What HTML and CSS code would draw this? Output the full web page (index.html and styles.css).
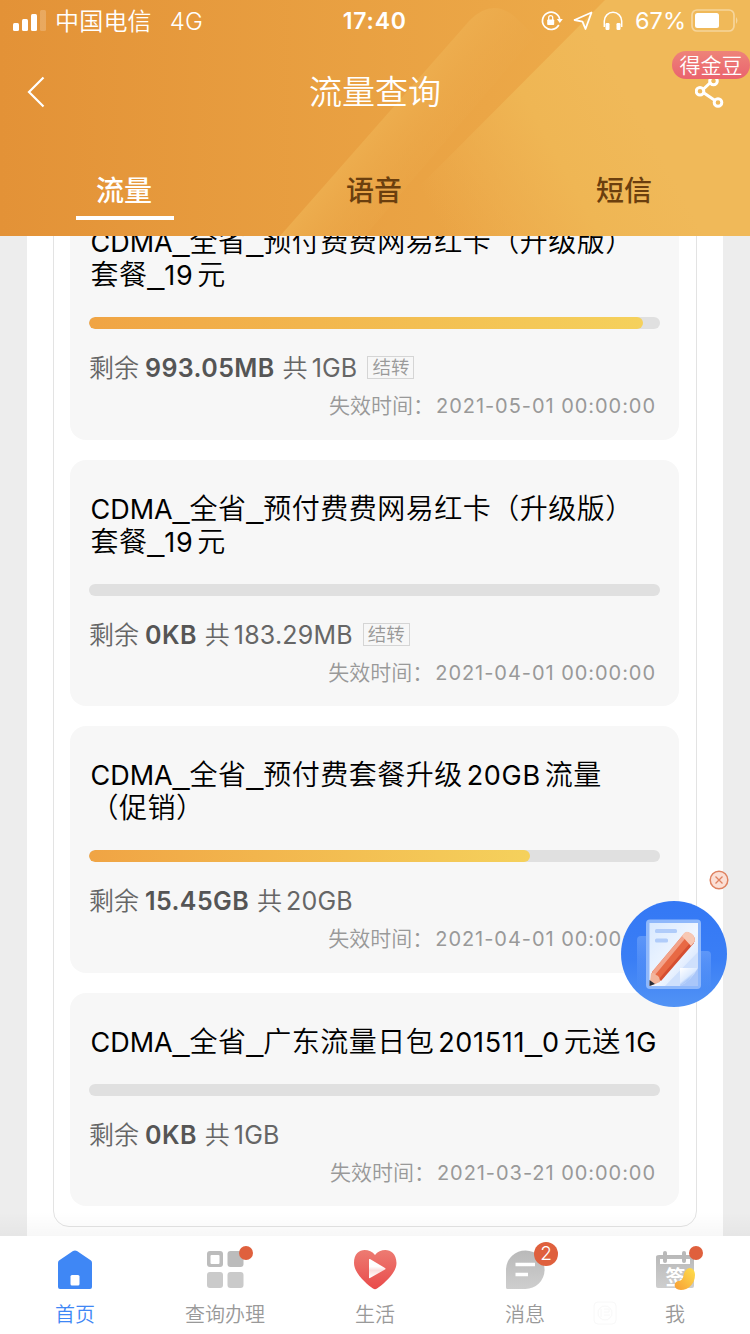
FILE: index.html
```html
<!DOCTYPE html>
<html lang="zh-CN">
<head>
<meta charset="utf-8">
<title>流量查询</title>
<link rel="stylesheet" href="styles.css">
</head>
<body>
<div class="app">
  <header class="header">
    <svg class="header-art" viewBox="0 0 750 236" preserveAspectRatio="none">
      <defs>
        <linearGradient id="base" x1="0" y1="0" x2="1" y2="0"><stop offset="0" stop-color="#e39237"/><stop offset=".65" stop-color="#eba646"/><stop offset="1" stop-color="#efb24e"/></linearGradient>
        <linearGradient id="band" gradientUnits="userSpaceOnUse" x1="375" y1="128" x2="441" y2="186"><stop offset="0" stop-color="#edad4e"/><stop offset="1" stop-color="#eba748" stop-opacity="0"/></linearGradient>
        <linearGradient id="right" gradientUnits="userSpaceOnUse" x1="420" y1="190" x2="620" y2="80"><stop offset="0" stop-color="#efb254" stop-opacity="0"/><stop offset=".6" stop-color="#efb654"/><stop offset="1" stop-color="#f0b959"/></linearGradient>
      </defs>
      <rect width="750" height="236" fill="url(#base)"/>
      <path d="M280 236L470 20Q492 -2 514 16L535 36L365 236Z" fill="url(#band)"/>
      <path d="M605 0H750V236H370Z" fill="url(#right)"/>
    </svg>
    <div class="status">
      <svg class="signal" width="34" height="22" viewBox="0 0 34 22" fill="#fff"><rect x="0" y="13" width="6" height="8" rx="1.5"/><rect x="9" y="9" width="6" height="12" rx="1.5"/><rect x="18" y="4" width="6" height="17" rx="1.5"/><rect x="27" y="0" width="6" height="21" rx="1.5" opacity=".2"/></svg>
      <span class="carrier">中国电信</span><span class="net">4G</span>
      <span class="clock">17:40</span>
      <div class="status-right">
        <svg width="22" height="22" viewBox="0 0 22 22" fill="none" stroke="#fff" stroke-width="1.7"><path d="M17.8 15A8.7 8.7 0 1 1 18.7 9"/><path d="M15.800 9h6l-3 4z" fill="#fff" stroke="none"/><rect x="6.2" y="9.5" width="7" height="5.5" rx=".8" fill="#fff" stroke="none"/><path d="M7.7 10V7.6a2 2 0 0 1 4 0V10" stroke-width="1.3"/></svg>
        <svg class="arrow" width="20" height="20" viewBox="0 0 20 20" fill="none" stroke="#fff" stroke-width="1.8" stroke-linejoin="round"><path d="M18.5 1.5L1.5 9l8 1.7 3 7.3z"/></svg>
        <svg class="phones" width="20" height="20" viewBox="0 0 20 20"><path d="M1.3 16V10a8.7 8.7 0 0 1 17.4 0v6" fill="none" stroke="#fff" stroke-width="1.5"/><rect x="2.500" y="12" width="4" height="7" rx="1.2" fill="#fff"/><rect x="13.500" y="12" width="4" height="7" rx="1.2" fill="#fff"/></svg>
        <span class="percent">67%</span>
        <svg class="battery" width="48" height="24" viewBox="0 0 48 24"><rect x="1" y="1" width="42" height="21" rx="5" fill="none" stroke="#fff" stroke-opacity=".4" stroke-width="1.7"/><rect x="4" y="4" width="24" height="15" rx="2.5" fill="#fff"/><path d="M45 8q3 3.5 0 7z" fill="#fff" opacity=".4"/></svg>
      </div>
    </div>
    <div class="titlebar">
      <svg class="back" width="18" height="32" viewBox="0 0 18 32" fill="none" stroke="#fff" stroke-width="2.2"><path d="M16.5 1.5L2 16l14.500 14.500"/></svg>
      <h1>流量查询</h1>
      <div class="share">
        <svg width="30" height="32" viewBox="0 0 30 32" fill="none" stroke="#fff" stroke-width="3"><path d="M8 13.500L16 6M9 17L20 24.500"/><circle cx="5" cy="15.200" r="3.800"/><circle cx="18.500" cy="5" r="3.800"/><circle cx="23" cy="26.500" r="3.800"/></svg>
        <span class="bonus">得金豆</span>
      </div>
    </div>
    <nav class="tabs"><a class="tab active">流量</a><a class="tab">语音</a><a class="tab">短信</a></nav>
  </header>

  <main class="content">
    <div class="sheet">
      <div class="panel">
        <article class="card">
          <h2><span class="la">CDMA</span><span class="us">_</span>全省<span class="us">_</span>预付费费网易红卡（升级版）<br>套餐<span class="us">_</span><span class="num">19</span><span class="gap"></span>元</h2>
          <div class="bar"><div class="fill" style="width:97%"></div></div>
          <p class="remain">剩余<b>993.05MB</b>共<span class="total">1GB</span><span class="tag">结转</span></p>
          <p class="expire">失效时间：<span class="date">2021-05-01 00:00:00</span></p>
        </article>
        <article class="card">
          <h2><span class="la">CDMA</span><span class="us">_</span>全省<span class="us">_</span>预付费费网易红卡（升级版）<br>套餐<span class="us">_</span><span class="num">19</span><span class="gap"></span>元</h2>
          <div class="bar"></div>
          <p class="remain">剩余<b>0KB</b>共<span class="total">183.29MB</span><span class="tag">结转</span></p>
          <p class="expire">失效时间：<span class="date">2021-04-01 00:00:00</span></p>
        </article>
        <article class="card">
          <h2><span class="la">CDMA</span><span class="us">_</span>全省<span class="us">_</span>预付费套餐升级<span class="gap"></span><span class="num">20GB</span><span class="gap"></span>流量<br>（促销）</h2>
          <div class="bar"><div class="fill" style="width:77.25%"></div></div>
          <p class="remain">剩余<b>15.45GB</b>共<span class="total">20GB</span></p>
          <p class="expire">失效时间：<span class="date">2021-04-01 00:00:00</span></p>
        </article>
        <article class="card">
          <h2><span class="la">CDMA</span><span class="us">_</span>全省<span class="us">_</span>广东流量日包<span class="gap"></span><span class="num">201511</span><span class="us">_</span><span class="num">0</span><span class="gap"></span>元送<span class="gap"></span><span class="num">1G</span></h2>
          <div class="bar"></div>
          <p class="remain">剩余<b>0KB</b>共<span class="total">1GB</span></p>
          <p class="expire">失效时间：<span class="date">2021-03-21 00:00:00</span></p>
        </article>
      </div>
    </div>
  </main>

  <nav class="bottom">
    <a class="item on">
      <svg width="44" height="44" viewBox="0 0 44 44"><path d="M6 12.500Q5 13 5 15V39q0 2 2 2H37q2 0 2-2V15q0-2-1-2.500L24 3q-2-1.200-4 0Z" fill="#3f87f5"/><rect x="17.500" y="27" width="9" height="10.500" rx="1.500" fill="#fff"/></svg>
      <span>首页</span>
    </a>
    <a class="item">
      <svg width="44" height="44" viewBox="0 0 44 44"><defs><linearGradient id="gray" x1="0" y1="0" x2="0" y2="1"><stop offset="0" stop-color="#b9b9b9"/><stop offset="1" stop-color="#cecece"/></linearGradient></defs><rect x="4" y="3" width="16" height="16" rx="3" fill="#bcbcbc"/><rect x="7.500" y="7" width="9" height="9" rx="1" fill="#fff"/><rect x="24.500" y="3" width="16" height="16" rx="3" fill="#bcbcbc"/><rect x="4" y="24" width="16" height="16" rx="3" fill="#cacaca"/><rect x="24.500" y="24" width="16" height="16" rx="3" fill="#cacaca"/></svg>
      <i class="dot"></i><span>查询办理</span>
    </a>
    <a class="item">
      <svg width="44" height="44" viewBox="0 0 44 44"><defs><linearGradient id="heart" x1="0" y1="0" x2="0" y2="1"><stop offset="0" stop-color="#ed7b72"/><stop offset="1" stop-color="#e94b4b"/></linearGradient><linearGradient id="play" x1="0" y1="0" x2="0" y2="1"><stop offset=".4" stop-color="#fff"/><stop offset=".6" stop-color="#fbdedd"/><stop offset="1" stop-color="#fff"/></linearGradient></defs><path d="M22 7C16-.5 1-.5 1 15 1 26 15 37 20 40.500q2 1.500 4 0C29 37 43.500 26 43.500 15 43-.5 28-.5 22 7Z" fill="url(#heart)"/><path d="M16 11.500v18q0 1 1 .5L32 21.500q1-1 0-1.500L17 11q-1-.4-1 .500" fill="url(#play)"/></svg>
      <span>生活</span>
    </a>
    <a class="item">
      <svg width="44" height="44" viewBox="0 0 44 44"><path d="M3 40V21A19.300 19.300 0 1 1 22.300 41H4.500Q3 41 3 39.500" fill="url(#gray)"/><path d="M12.500 16.500h19.500M12.500 26.500h12.500" stroke="#fff" stroke-width="3.400"/></svg>
      <i class="count">2</i><span>消息</span>
    </a>
    <a class="item">
      <svg width="44" height="44" viewBox="0 0 44 44"><defs><linearGradient id="gold" x1="1" y1="0" x2="0" y2="1"><stop offset="0" stop-color="#ffe04c"/><stop offset="1" stop-color="#f79d35"/></linearGradient></defs><path d="M6 7H40q1 0 1 1V38q0 2-2 2H5q-2 0-2-2V9q0-2 3-2Z" fill="url(#gray)"/><path d="M7 11H37v5H7Z" fill="#fff"/><rect x="10" y="3" width="4" height="12" rx="2" fill="#b9b9b9"/><rect x="29" y="3" width="4" height="12" rx="2" fill="#b9b9b9"/><text x="22.500" y="37" text-anchor="middle" class="sign">签</text><path d="M33 22C36 18 42 20 42 27 42 36 35 42 28 42 20 42 20 34 25.500 33 32 32 29 26 33 22Z" fill="url(#gold)"/></svg>
      <i class="dot"></i><span>我</span>
    </a>
  </nav>

  <svg class="stamp" width="24" height="24" viewBox="0 0 24 24" fill="none" stroke="#f8f8f8"><rect x="1" y="1" width="22" height="22" rx="4"/><circle cx="12" cy="12" r="7"/><path d="M8 8v8M11 8h5v3h-5M11 14h6"/></svg>
  <svg class="close" width="20" height="20" viewBox="0 0 20 20" fill="#fbdfd5" stroke="#df8260"><circle cx="10" cy="10" r="8.800" stroke-width="1.500"/><path d="M6.500 6.500l7 7M13.500 6.500l-7 7" stroke-width="1.300"/></svg>
  <svg class="float" width="106" height="106" viewBox="0 0 106 106">
    <defs>
      <linearGradient id="blue" x1="0" y1="0" x2="0" y2="1"><stop offset="0" stop-color="#3478f5"/><stop offset=".55" stop-color="#3a7ef5"/><stop offset="1" stop-color="#5293f5"/></linearGradient>
      <linearGradient id="paper" x1="0" y1="0" x2="1" y2="1"><stop offset="0" stop-color="#d8e9ff"/><stop offset=".55" stop-color="#f0f6ff"/><stop offset="1" stop-color="#c5dafc"/></linearGradient>
      <linearGradient id="side" x1="0" y1="0" x2="0" y2="1"><stop offset="0" stop-color="#76a8fa" stop-opacity=".6"/><stop offset="1" stop-color="#76a8fa" stop-opacity="0"/></linearGradient>
      <linearGradient id="fold" x1="0" y1="0" x2=".8" y2="1"><stop offset="0" stop-color="#fff"/><stop offset=".5" stop-color="#dceaff"/><stop offset=".6" stop-color="#aecaf9"/></linearGradient>
    </defs>
    <circle cx="53" cy="53" r="53" fill="url(#blue)"/>
    <rect x="16" y="35" width="18" height="51" rx="4" fill="url(#side)"/><rect x="72" y="50" width="18" height="38" rx="4" fill="url(#side)"/>
    <rect x="25" y="18.500" width="55" height="69.500" rx="4" fill="#8fb8fb"/>
    <rect x="28.500" y="22" width="48.500" height="63" fill="url(#paper)"/>
    <path d="M44 85L77 51V85Z" fill="#cfe0fc"/>
    <path d="M59 67H77L67 80L59 85Z" fill="url(#fold)"/>
    <path d="M77 67V85H59Q70 80 77 67Z" fill="#a9c6f9"/>
    <rect x="34" y="28" width="22" height="4" rx="1.500" fill="#b0ccfa"/><rect x="34" y="37.500" width="13" height="4" rx="1.500" fill="#b0ccfa"/>
    <path d="M31 71L62 34q1-2 4-3 8 2 8 9L40 79l-6 4Z" fill="#e86944"/>
    <path d="M31 71L62 34l3 2.500L34 74Z" fill="#f3a38a"/><path d="M38 78L70 41l3 1-33 38Z" fill="#d54e31"/>
    <path d="M61 35Q64 30 67 31 74 33 74 40L70 45Z" fill="#f7c8b4"/>
    <path d="M30 72q3-1 5 2 4 1 4 7L30 84.500H28.500Z" fill="#f2b59c"/><path d="M28.500 79l5.500 4-5.500 2Z" fill="#292d38"/>
  </svg>
</div>
</body>
</html>
```
FILE: styles.css
```css
* { box-sizing: border-box; }
body { margin: 0; font-family: Inter, "Noto Sans CJK SC", sans-serif; }
h1, h2, p { margin: 0; font-weight: 400; }
.app { position: relative; width: 750px; height: 1334px; display: flex; flex-direction: column; overflow: hidden; background: #ededed; }

.header { position: relative; height: 236px; flex: none; color: #fff; }
.header-art { position: absolute; inset: 0; width: 750px; height: 236px; }
.status { position: relative; height: 42px; padding-left: 13px; display: flex; align-items: center; font-size: 24px; font-weight: 350; }
.signal { margin-top: -1px; }
.carrier { margin: -3px 0 0 8px; letter-spacing: .2px; }
.net { margin-left: 18px; }
.clock { margin-left: 140px; font-size: 23px; font-weight: 600; letter-spacing: .8px; }
.status-right { position: absolute; right: 11px; top: 0; height: 41px; display: flex; align-items: center; }
.arrow { margin-left: 10px; }
.phones { margin-left: 10px; }
.percent { margin-left: 12px; font-size: 23.500px; font-weight: 400; }
.battery { margin-left: 5px; }
.titlebar { position: relative; height: 100px; padding: 0 25px 0 27px; display: flex; align-items: center; justify-content: space-between; }
h1 { position: absolute; inset: 0; text-align: center; font-size: 33px; line-height: 101px; font-weight: 350; }
.share { position: relative; height: 32px; }
.bonus { position: absolute; left: -23px; top: -25px; width: 78px; height: 28px; border-radius: 14px; background: linear-gradient(#ee8379, #ea636e); font-size: 21px; line-height: 29px; text-align: center; font-weight: 350; }
.tabs { position: relative; display: flex; height: 94px; }
.tab { flex: 1; position: relative; text-align: center; font-size: 28px; line-height: 99px; color: #6b3f0e; font-weight: 500; left: -1px; }
.tab.active { color: #fff; }
.tab.active::after { content: ""; position: absolute; left: 77px; bottom: 16px; width: 98px; height: 4px; background: #fff; }

.content { position: relative; height: 1000px; overflow: hidden; display: flex; flex-direction: column; justify-content: flex-end; }
.content::after { content: ""; position: absolute; left: 0; right: 0; bottom: 0; height: 24px; background: linear-gradient(rgba(0,0,0,0), rgba(0,0,0,.03)); }
.sheet { flex: none; margin: 0 27px; padding: 0 26px 9px; background: #fff; }
.panel { border: 1px solid #e3e3e3; border-radius: 16px; padding: 20px 17px 20px 16px; display: flex; flex-direction: column; gap: 20px; }
.card { height: 246.600px; padding: 33px 19px 0; border-radius: 16px; background: #f7f7f7; }
.card:last-child { height: 213px; }
h2 { font-size: 28px; line-height: 33px; color: #000; letter-spacing: .5px; font-weight: 350; white-space: nowrap; padding-left: 1.500px; }
.la, .num { font-size: 27px; font-weight: 400; letter-spacing: 0; }
.num { letter-spacing: .7px; }
.us { font-family: "Liberation Sans", sans-serif; font-size: 30px; line-height: 0; letter-spacing: 0; vertical-align: 1px; }
.gap { display: inline-block; width: 4px; }
.bar { height: 12px; margin-top: 25px; border-radius: 6px; background: #e0e0e0; overflow: hidden; }
.fill { height: 100%; border-radius: 6px; background: linear-gradient(90deg, #f0a444, #f5d15c); }
.remain { height: 40px; line-height: 40px; margin-top: 19px; font-size: 25px; color: #666; font-weight: 350; white-space: nowrap; }
.remain b { margin: 0 8px 0 6px; font-weight: 600; color: #555; letter-spacing: .4px; }
.total { margin-left: 4px; font-weight: 400; letter-spacing: .2px; }
.tag { display: inline-block; vertical-align: 3px; margin-left: 10px; height: 23px; padding: 0 4px; border: 1px solid #d5d5d5; color: #999; font-size: 18.500px; line-height: 21px; }
.expire { height: 34px; line-height: 36px; text-align: right; padding-right: 4px; font-size: 21px; color: #999; font-weight: 350; white-space: nowrap; }
.date { margin-left: 2px; font-size: 20px; font-weight: 400; letter-spacing: .95px; }

.bottom { height: 98px; flex: none; background: #fff; display: flex; }
.item { position: relative; flex: 1; padding-top: 12px; display: flex; flex-direction: column; align-items: center; color: #999; font-size: 20px; font-weight: 350; }
.item svg { flex: none; }
.item span { line-height: 30px; margin-top: 8px; }
.item.on { color: #3f87f5; }
.item i { position: absolute; font-style: normal; border-radius: 50%; background: #df603d; color: #fff; }
.dot { left: 89px; top: 10px; width: 14px; height: 14px; }
.count { left: 84px; top: 6px; width: 24px; height: 24px; font-size: 19px; line-height: 24px; text-align: center; }
.sign { font-family: "Noto Sans CJK SC", sans-serif; font-size: 20px; font-weight: 700; fill: #fff; }
.stamp { position: absolute; left: 593px; top: 1301px; }
.close { position: absolute; left: 709px; top: 870px; }
.float { position: absolute; left: 621px; top: 901px; }
```
